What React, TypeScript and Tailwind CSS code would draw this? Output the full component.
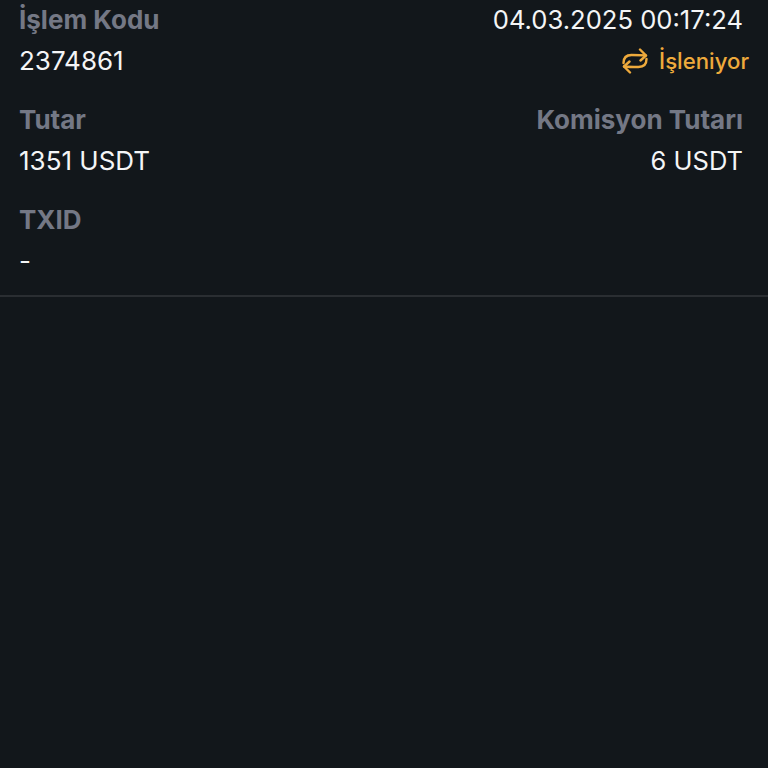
function Label({ children }: { children: React.ReactNode }) {
  return <div className="h-10 text-[26px] leading-10 font-bold text-[#747885]">{children}</div>;
}

function Value({ children }: { children: React.ReactNode }) {
  return <div className="h-10 pt-px text-[26px] leading-10 text-[#f4f5f6]">{children}</div>;
}

function SyncIcon() {
  return (
    <svg width="26" height="26" viewBox="0 0 26 26" fill="none" stroke="#eeaa3c" strokeWidth="2.4" strokeLinecap="round" strokeLinejoin="round">
      <path d="M1.5 15C1.5 10 4.5 7 9.5 7C14 7 19 7 24 7.5" />
      <path d="M18 1.5L24 7.5L18.5 12.5" />
      <path d="M24.5 11C24.5 16 21.5 19 16.5 19C12 19 7 19 2 18.5" />
      <path d="M8 24.5L2 18.5L7.5 13.5" />
    </svg>
  );
}

export default function App() {
  return (
    <div className="h-[768px] w-[768px] overflow-hidden bg-[#12171b] font-['Inter',sans-serif]">
      <div className="flex flex-col gap-5 border-b-2 border-[#2a2e32] pr-[25px] pb-[15px] pl-[19px]">
        <div className="flex justify-between">
          <div>
            <Label>İşlem Kodu</Label>
            <Value>2374861</Value>
          </div>
          <div className="flex flex-col items-end">
            <div className="h-10 text-[25.6px] leading-10 text-[#f4f5f6]">04.03.2025 00:17:24</div>
            <div className="-mr-1.5 flex h-10 items-center gap-[11px] pt-px text-[22.2px] font-medium text-[#eeaa3c]">
              <SyncIcon />
              <span>İşleniyor</span>
            </div>
          </div>
        </div>
        <div className="flex justify-between">
          <div>
            <Label>Tutar</Label>
            <Value>1351 USDT</Value>
          </div>
          <div className="text-right">
            <Label>Komisyon Tutarı</Label>
            <div className="h-10 pt-px text-[25.5px] leading-10 text-[#f4f5f6]">6 USDT</div>
          </div>
        </div>
        <div>
          <Label>TXID</Label>
          <Value>-</Value>
        </div>
      </div>
    </div>
  );
}
